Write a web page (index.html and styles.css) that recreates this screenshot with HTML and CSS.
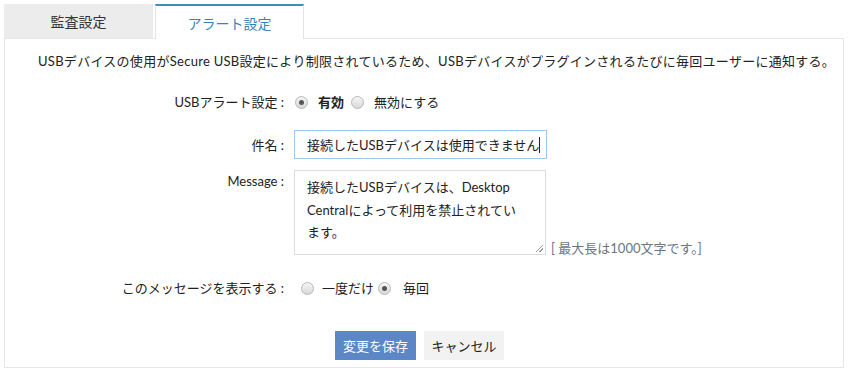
FILE: index.html
```html
<!DOCTYPE html>
<html lang="ja">
<head>
    <meta charset="UTF-8">
    <title>アラート設定</title>
    <link rel="stylesheet" href="styles.css">
</head>
<body>

<div class="tabs">
    <div class="tab">監査設定</div>
    <div class="tab active">アラート設定</div>
</div>

<div class="panel">
    <p class="desc">USBデバイスの使用がSecure USB設定により制限されているため、USBデバイスがプラグインされるたびに毎回ユーザーに通知する。</p>

    <div class="row radio-row">
        <label class="lbl">USBアラート設定 :</label>
        <div class="field">
            <span class="radio checked"></span><b class="opt">有効</b>
            <span class="radio"></span><span class="opt">無効にする</span>
        </div>
    </div>

    <div class="row input-row">
        <label class="lbl">件名 :</label>
        <div class="field">
            <div class="text-input">接続したUSBデバイスは使用できません<span class="caret"></span></div>
        </div>
    </div>

    <div class="row msg-row">
        <label class="lbl">Message :</label>
        <div class="field">
            <div class="textarea">接続したUSBデバイスは、Desktop Centralによって利用を禁止されています。<span class="grip"></span></div>
            <span class="hint">[ 最大長は1000文字です。]</span>
        </div>
    </div>

    <div class="row radio-row show-row">
        <label class="lbl">このメッセージを表示する :</label>
        <div class="field">
            <span class="radio"></span><span class="opt">一度だけ</span>
            <span class="radio checked"></span><span class="opt">毎回</span>
        </div>
    </div>

    <div class="actions">
        <button class="btn primary">変更を保存</button>
        <button class="btn">キャンセル</button>
    </div>
</div>

</body>
</html>
```

FILE: styles.css
```css
body { margin: 0; padding: 4px 4px 0 4px; background: #fff; font-family: Lato, "Noto Sans CJK JP", sans-serif; font-size: 13px; color: #222; }
.tabs { display: flex; gap: 2px; height: 34px; }
.tab { width: 149px; display: flex; align-items: center; justify-content: center; background: #ececec; font-size: 14px; color: #333; box-sizing: border-box; }
.tab.active { background: #fff; color: #3b82c0; border-top: 2px solid #3a8dc5; border-left: 1px solid #e3e3e3; border-right: 1px solid #e3e3e3; height: 35px; }
.panel { border: 1px solid #e6e6e6; width: 840px; height: 330px; box-sizing: border-box; }
.desc { margin: 12px 0 0 33px; line-height: 20px; letter-spacing: 0.28px; }
.row { display: flex; }
.lbl { width: 279px; text-align: right; flex-shrink: 0; }
.field { display: flex; align-items: center; }
.radio-row { margin-top: 21px; line-height: 20px; }
.radio-row .field { margin-left: 11px; }
.radio { width: 13px; height: 13px; border-radius: 50%; border: 1px solid #b8b8b8; background: linear-gradient(#f6f6f6, #d8d8d8); box-sizing: border-box; position: relative; margin-right: 10px; }
.radio.checked::after { content: ""; position: absolute; left: 3px; top: 3px; width: 5px; height: 5px; border-radius: 50%; background: #555; }
.opt { margin-right: 7px; }
b.opt { font-weight: bold; }
.input-row { margin-top: 18px; align-items: center; }
.input-row .field { margin-left: 10px; }
.text-input { width: 253px; height: 29px; box-sizing: border-box; border: 1px solid #a3c6ef; padding: 0 0 0 12px; display: flex; align-items: center; white-space: nowrap; overflow: hidden; }
.caret { display: inline-block; width: 1px; height: 16px; background: #222; }
.msg-row { margin-top: 11px; }
.msg-row .lbl { padding-top: 3px; }
.msg-row .field { margin-left: 10px; align-items: flex-end; }
.textarea { position: relative; width: 252px; height: 85px; box-sizing: border-box; border: 1px solid #dcdcdc; padding: 5px 20px 0 12px; line-height: 22.5px; }
.grip { position: absolute; right: 2px; bottom: 2px; width: 7px; height: 7px; background: linear-gradient(135deg, transparent 45%, #999 45%, #999 55%, transparent 55%, transparent 70%, #999 70%, #999 80%, transparent 80%); }
.hint { margin-left: 5px; color: #6b7583; line-height: 14px; }
.show-row { margin-top: 23px; }
.show-row .field { margin-left: 17px; }
.show-row .radio { margin-right: 8px; }
.show-row .opt { margin-right: 4px; }
.show-row .opt + .radio.checked { margin-right: 12px; }
.actions { display: flex; gap: 8px; margin: 33px 0 0 330px; }
.btn { font-family: inherit; font-size: 13px; height: 29px; padding: 0; border: none; background: #f2f2f2; color: #222; cursor: pointer; white-space: nowrap; }
.btn.primary { background: #5b87c6; color: #fff; width: 81px; }
.btn:not(.primary) { width: 80px; }
```
